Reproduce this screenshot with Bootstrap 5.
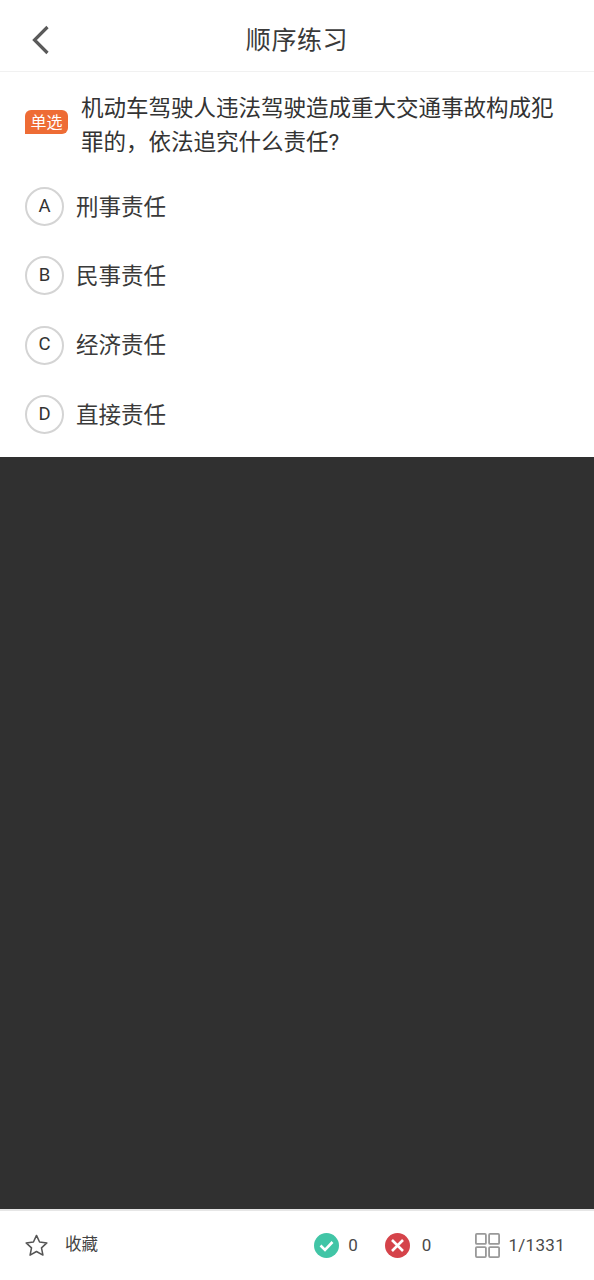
<!DOCTYPE html>
<html lang="zh-CN">
<head>
<meta charset="utf-8">
<title>顺序练习</title>
<link href="https://cdn.jsdelivr.net/npm/bootstrap@5.3.0/dist/css/bootstrap.min.css" rel="stylesheet">
<style>
html, body { height: 100%; }
body { font-family: Roboto, "Noto Sans CJK SC", sans-serif; color: #333; background: #fff; }
.app-screen { height: 1280px; }
.top-bar { height: 72px; border-bottom: 1px solid #f1f1f1; padding-left: 30px; }
.back-btn { width: 24px; height: 34px; margin-top: 8px; }
.top-title { font-size: 25px; line-height: 36px; letter-spacing: .6px; left: 0; right: 0; top: 23px; color: #3a3a3a; }
.q-area { padding: 18px 25px 0; }
.q-tag { width: 43px; height: 24px; margin-top: 20px; background: #ee6c35; color: #fff; font-size: 16px; line-height: 25px; border-radius: 6px 6px 6px 0; margin-right: 13px; }
.q-text { font-size: 22.5px; line-height: 34px; width: 480px; color: #333; padding-top: 1px; }
.opt-list { padding: 13px 25px 8px; }
.opt-row { height: 69.3px; }
.opt-dot { width: 39px; height: 39px; border: 2px solid #d4d4d4; font-size: 18.5px; color: #333; margin-right: 12px; }
.opt-text { font-size: 22.5px; color: #3a3a3a; padding-top: 2px; }
.dark-fill { background: #303030; }
.bottom-bar { height: 71px; border-top: 2px solid #e6e6e6; padding: 0 29px 0 25px; color: #444; }
.fav-text { font-size: 16.5px; margin-left: 17px; }
.stat-num { font-size: 17px; color: #4a4a4a; }
.stat-ok { margin-left: auto; }
.stat-ok .stat-num { margin-left: 9px; }
.stat-bad .stat-num { margin-left: 12px; }
.stat-bad { margin-left: 27px; }
.stat-grid { margin-left: 44px; }
.stat-grid .stat-num { margin-left: 8px; letter-spacing: .3px; }
</style>
</head>
<body>
<div class="app-screen d-flex flex-column">
  <header class="top-bar d-flex align-items-center position-relative flex-shrink-0">
    <svg class="back-btn" viewBox="0 0 24 34" fill="none" stroke="#5a5a5a" stroke-width="3.2"><path d="M17.5 4 L4.5 17 L17.5 30"/></svg>
    <div class="top-title position-absolute text-center">顺序练习</div>
  </header>
  <section class="q-area d-flex flex-shrink-0">
    <span class="q-tag text-center flex-shrink-0">单选</span>
    <div class="q-text">机动车驾驶人违法驾驶造成重大交通事故构成犯罪的，依法追究什么责任?</div>
  </section>
  <section class="opt-list flex-shrink-0">
    <div class="opt-row d-flex align-items-center"><span class="opt-dot rounded-circle d-flex align-items-center justify-content-center">A</span><span class="opt-text">刑事责任</span></div>
    <div class="opt-row d-flex align-items-center"><span class="opt-dot rounded-circle d-flex align-items-center justify-content-center">B</span><span class="opt-text">民事责任</span></div>
    <div class="opt-row d-flex align-items-center"><span class="opt-dot rounded-circle d-flex align-items-center justify-content-center">C</span><span class="opt-text">经济责任</span></div>
    <div class="opt-row d-flex align-items-center"><span class="opt-dot rounded-circle d-flex align-items-center justify-content-center">D</span><span class="opt-text">直接责任</span></div>
  </section>
  <div class="dark-fill flex-grow-1"></div>
  <footer class="bottom-bar d-flex align-items-center flex-shrink-0">
    <svg width="23" height="23" viewBox="0 0 24 24" fill="none" stroke="#555" stroke-width="1.6" stroke-linejoin="round"><path d="M12 1.5 L15.2 8.3 L22.8 9.3 L17.2 14.5 L18.7 22 L12 18.3 L5.3 22 L6.8 14.5 L1.2 9.3 L8.8 8.3 Z"/></svg>
    <span class="fav-text">收藏</span>
    <div class="stat-ok d-flex align-items-center">
      <svg width="25" height="25" viewBox="0 0 25 25"><circle cx="12.5" cy="12.5" r="12.5" fill="#41c5a6"/><path d="M6.5 12.5 L11 17 L18.5 9" fill="none" stroke="#fff" stroke-width="2.6"/></svg>
      <span class="stat-num">0</span>
    </div>
    <div class="stat-bad d-flex align-items-center">
      <svg width="25" height="25" viewBox="0 0 25 25"><circle cx="12.5" cy="12.5" r="12.5" fill="#d5434a"/><path d="M7 7 L18 18 M18 7 L7 18" fill="none" stroke="#fff" stroke-width="2.6"/></svg>
      <span class="stat-num">0</span>
    </div>
    <div class="stat-grid d-flex align-items-center">
      <svg width="25" height="25" viewBox="0 0 25 25" fill="none" stroke="#999" stroke-width="1.8"><rect x=".9" y=".9" width="10" height="10" rx="1"/><rect x="14.1" y=".9" width="10" height="10" rx="1"/><rect x=".9" y="14.1" width="10" height="10" rx="1"/><rect x="14.1" y="14.1" width="10" height="10" rx="1"/></svg>
      <span class="stat-num">1/1331</span>
    </div>
  </footer>
</div>
<script src="https://cdn.jsdelivr.net/npm/bootstrap@5.3.0/dist/js/bootstrap.bundle.min.js"></script>
</body>
</html>
